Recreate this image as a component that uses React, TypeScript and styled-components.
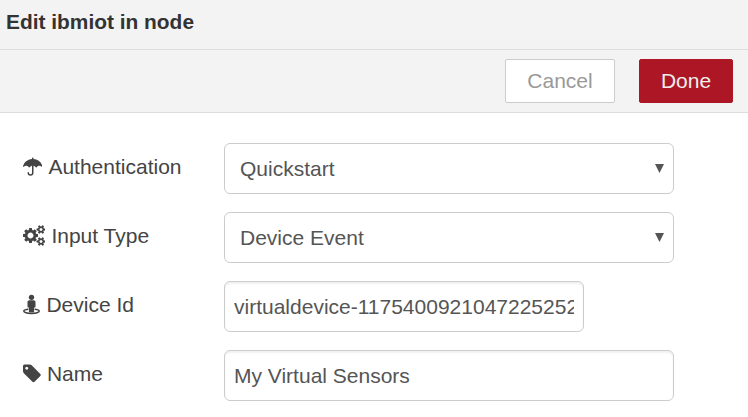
import React from "react";
import styled, { createGlobalStyle } from "styled-components";

const Global = createGlobalStyle`
  * { box-sizing: border-box; }
  body { margin: 0; background: #fff; font-family: "Liberation Sans", Arial, sans-serif; color: #444; overflow: hidden; }
`;
const Title = styled.header`
  height: 50px; padding: 10px 6px 0; background: #f3f3f3; border-bottom: 1px solid #ddd;
  font-size: 20.9px; line-height: 24px; font-weight: bold; color: #333;
`;
const Toolbar = styled.div`
  height: 63px; display: flex; justify-content: flex-end; gap: 24px; padding: 9px 15px 0;
  background: #f3f3f3; border-bottom: 1px solid #ddd;
`;
const Button = styled.button<{ $primary?: boolean }>`
  width: ${p => (p.$primary ? 94 : 110)}px; height: 44px; padding: 0; border-radius: 2px;
  border: 1px solid ${p => (p.$primary ? "#ad1625" : "#ccc")};
  background: ${p => (p.$primary ? "#ad1625" : "#fff")};
  color: ${p => (p.$primary ? "#eee" : "#999")};
  font: 21px "Liberation Sans", Arial, sans-serif;
`;
const Form = styled.form`
  display: flex; flex-direction: column; gap: 18px; padding: 30px 22.5px 0;
`;
const Row = styled.div`
  display: grid; grid-template-columns: 201.5px auto; justify-content: start; height: 51px;
`;
const Label = styled.label`
  display: flex; align-items: center; gap: 6.4px; height: 47px; font-size: 21px; white-space: nowrap;
`;
const Glyph = styled.svg`
  height: 21px; flex: none; fill: #444;
`;
const Control = styled.div`
  width: 450px; height: 51px; padding: 0 9px 0 15px;
  display: flex; align-items: center; justify-content: space-between;
  border: 1px solid #ccc; border-radius: 6px; font-size: 21px; color: #555;
`;
const Arrow = styled.svg`
  width: 9px; height: 9px; fill: #555;
`;
const TextInput = styled.input<{ $short?: boolean }>`
  width: ${p => (p.$short ? 360 : 450)}px; height: 51px; padding: 0 9px;
  border: 1px solid #ccc; border-radius: 6px; outline: none; background: #fff;
  box-shadow: inset 0 2px 2px rgba(0, 0, 0, 0.06);
  font: 21px "Liberation Sans", Arial, sans-serif; color: #555;
`;

const smallCog = "v140q0 16-149 31-12 27-30 52 51 113 51 138 0 4-4 7-122 71-124 71-8 0-46-47t-52-68q-20 2-30 2t-30-2q-14 21-52 68t-46 47q-2 0-124-71-4-3-4-7 0-25 51-138-18-25-30-52-149-15-149-31v-140q0-16 149-31 13-29 30-52-51-113-51-138 0-4 4-7 4-2 35-20t59-34 30-16q8 0 46 46.500t52 67.500q20-2 30-2t30 2q51-71 92-112l6-2q4 0 124 70 4 3 4 7 0 25-51 138 17 23 30 52 149 15 149 31z";

const UmbrellaIcon = () => (
  <Glyph width="19.5" viewBox="0 0 19.5 21">
    <path d="M9 3V2.200a.75.75 0 0 1 1.500 0V3C15 3.300 18.500 6.300 19.500 10.400c.1.500-.3.700-.7.400-1.800-1.600-3.800-1.500-5.100.4-.3.400-.6.400-.8 0-1.300-2.100-5-2.100-6.300 0-.2.400-.5.400-.8 0-1.300-1.900-3.300-2-5.100-.4-.4.300-.8.100-.7-.4C1 6.300 4.500 3.300 9 3z" />
    <path d="M9.750 9.500v7.300a2.250 2.250 0 0 1-4.500 0" fill="none" stroke="#444" strokeWidth="1.500" strokeLinecap="round" />
  </Glyph>
);
const CogsIcon = () => (
  <Glyph width="22.5" viewBox="0 0 1920 1792">
    <path d="M896 896q0-106-75-181t-181-75-181 75-75 181 75 181 181 75 181-75 75-181zm384-91v185q0 10-7 19.500t-16 10.500l-155 24q-11 35-32 76 34 48 90 115 7 11 7 20 0 12-7 19-23 30-82.500 89.500t-78.500 59.500q-11 0-21-7l-115-90q-37 19-77 31-11 108-23 155-7 24-30 24h-186q-11 0-20-7.500t-10-17.500l-23-153q-34-10-75-31l-118 89q-7 7-20 7-11 0-21-8-144-133-144-160 0-9 7-19 10-14 41-53t47-61q-23-44-35-82l-152-24q-10-1-17-9.500t-7-19.500v-185q0-10 7-19.500t16-10.500l155-24q11-35 32-76-34-48-90-115-7-11-7-20 0-12 7-20 22-30 82-89t79-59q11 0 21 7l115 90q34-18 77-32 11-108 23-154 7-24 30-24h186q11 0 20 7.500t10 17.500l23 153q34 10 75 31l118-89q8-7 20-7 11 0 21 8 144 133 144 160 0 8-7 19-12 16-42 54t-45 60q23 48 34 82l152 23q10 2 17 10.500t7 19.500z" />
    {[384, 1408].map(y => (
      <path
        key={y}
        fillRule="evenodd"
        d={`M1664 ${y}q0-52-38-90t-90-38-90 38-38 90q0 53 37.500 90.500t90.500 37.500 90.500-37.500 37.500-90.500zM1920 ${y - 70}${smallCog}`}
      />
    ))}
  </Glyph>
);
const StreetViewIcon = () => (
  <Glyph width="17.5" viewBox="0 0 17.5 21">
    <circle cx="8.5" cy="3.300" r="2.650" />
    <path d="M6.400 6.200h4.200c1.100 0 1.900.8 1.900 1.800v4.400c0 .7-.4 1.100-1 1.100h-.4v4.100c0 .6-.4 1-1 1H6.900c-.6 0-1-.4-1-1v-4.100h-.4c-.6 0-1-.4-1-1.100V8c0-1 .8-1.800 1.900-1.800z" />
    <path d="M4.900 15.200c-2.600.4-4.150 1-4.150 1.900 0 1.300 3.500 2.350 7.750 2.350s7.750-1.050 7.750-2.350c0-.9-1.550-1.500-4.150-1.900" fill="none" stroke="#444" strokeWidth="1.500" strokeLinecap="round" />
  </Glyph>
);
const TagIcon = () => (
  <Glyph width="18" viewBox="0 0 1536 1792">
    <path d="M448 448q0-53-37.500-90.500t-90.500-37.500-90.500 37.500-37.500 90.500 37.500 90.500 90.500 37.500 90.500-37.500 37.500-90.500zm1067 576q0 53-37 90l-491 492q-39 37-91 37-53 0-90-37l-715-716q-38-37-64.500-101t-26.500-117v-416q0-52 38-90t90-38h416q53 0 117 26.500t102 64.500l715 714q37 39 37 91z" />
  </Glyph>
);

const Select = ({ value }: { value: string }) => (
  <Control role="combobox">
    <span>{value}</span>
    <Arrow viewBox="0 0 9 9"><path d="M0 0h9L4.500 9z" /></Arrow>
  </Control>
);

export default function App() {
  return (
    <>
      <Global />
      <Title>Edit ibmiot in node</Title>
      <Toolbar>
        <Button>Cancel</Button>
        <Button $primary>Done</Button>
      </Toolbar>
      <Form>
        <Row><Label><UmbrellaIcon />Authentication</Label><Select value="Quickstart" /></Row>
        <Row><Label><CogsIcon />Input Type</Label><Select value="Device Event" /></Row>
        <Row><Label><StreetViewIcon />Device Id</Label><TextInput $short defaultValue="virtualdevice-11754009210472252525" /></Row>
        <Row><Label><TagIcon />Name</Label><TextInput defaultValue="My Virtual Sensors" /></Row>
      </Form>
    </>
  );
}
